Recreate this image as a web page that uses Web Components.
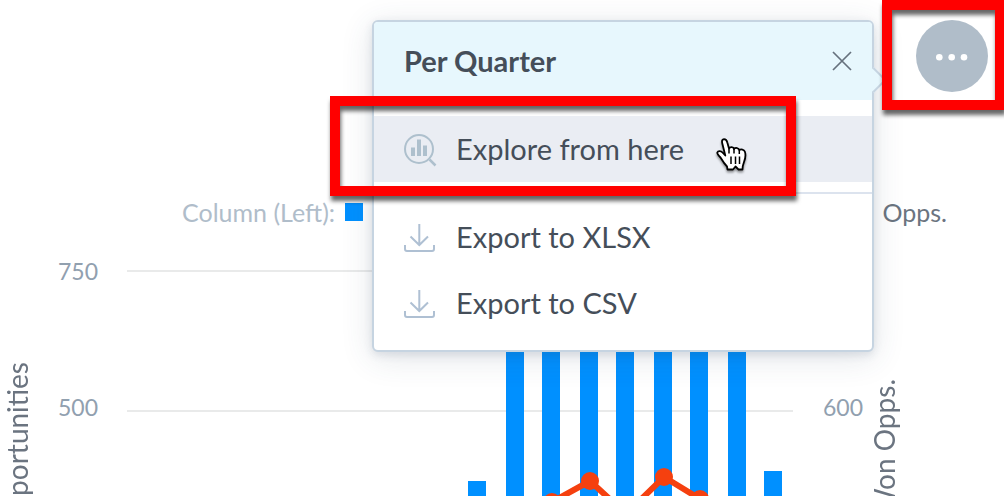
<!DOCTYPE html>
<html lang="en">
<head>
<meta charset="utf-8">
<meta name="viewport" content="width=device-width, initial-scale=1">
<title>Per Quarter</title>
<style>
  body { margin: 0; background: #fff; color: #454e59; font-family: Lato, "Noto Sans", sans-serif; font-size: 25px; line-height: 28px; }
</style>
</head>
<body>
<widget-page></widget-page>
<script>
const define = (name, html) => customElements.define(name, class extends HTMLElement {
  constructor() {
    super();
    this.attachShadow({ mode: "open" }).innerHTML = html;
  }
});

/* Red frame laid over a control to call it out */
define("callout-frame", `
<style>
  :host { position: absolute; box-sizing: border-box; border: 10px solid #f00; pointer-events: none;
          filter: drop-shadow(1px 5px 2px rgba(0,0,0,.6)); }
</style>`);

define("more-button", `
<style>
  :host { display: block; position: relative; }
  button { display: block; width: 72px; height: 72px; padding: 0; border: 0; border-radius: 50%; background: #b0bdc9; cursor: pointer; }
  svg { display: block; }
</style>
<button type="button" aria-label="More options">
  <svg width="72" height="72" viewBox="0 0 72 72" fill="#fff"><circle cx="23.300" cy="37.300" r="3.300"/><circle cx="35.700" cy="37.300" r="3.300"/><circle cx="48" cy="37.300" r="3.300"/></svg>
</button>
<slot></slot>`);

define("chart-legend", `
<style>
  :host { display: flex; justify-content: space-between; padding: 0 57px 0 182px; }
  .group { display: flex; align-items: center; gap: 10px; color: #b0bdca; }
  .swatch { width: 18px; height: 18px; background: #0090ff; }
  .series { color: #6b7480; }
</style>
<div class="group"><span>Column (Left):</span><span class="swatch"></span></div>
<div class="series">Opps.</div>`);

define("axis-title", `
<style>
  :host { display: block; writing-mode: vertical-rl; transform: rotate(180deg); white-space: nowrap; color: #6b7480; font-size: 28px; line-height: 34px; }
</style>
<slot></slot>`);

define("axis-ticks", `
<style>
  :host { display: flex; flex-direction: column; gap: 108px; padding-top: 17px; color: #91a0af; font-size: 23px; }
</style>
<slot></slot>`);

define("chart-plot", `
<style>
  :host { display: block; }
  svg { display: block; width: 100%; }
</style>
<svg viewBox="0 0 666 300" role="img" aria-label="Opportunities and won opportunities per quarter">
  <path d="M0 31H666M0 171H666" stroke="#e9eaea" stroke-width="2"/>
  <path fill="#0090ff" d="M341 241h18v59h-18zM379 60h18v240h-18zM415 60h18v240h-18zM453 60h18v240h-18zM489 60h18v240h-18zM527 60h18v240h-18zM563 60h18v240h-18zM601 60h18v240h-18zM637 231h18v69h-18z"/>
  <g fill="#f5400f"><path d="M387 285L425 262L463 241L499 274L537 237L573 259L610 285" fill="none" stroke="#f5400f" stroke-width="6"/>
  <circle cx="425" cy="262" r="9"/><circle cx="463" cy="241" r="9"/><circle cx="499" cy="274" r="9"/><circle cx="537" cy="237" r="9"/><circle cx="573" cy="259" r="9"/></g>
</svg>`);

define("quarter-chart", `
<style>
  :host { display: block; }
  .body { display: grid; grid-template-columns: 34px 64px minmax(0, 1fr) 44px 34px; align-items: start; margin-top: 14px; padding: 0 103px 0 0; }
  .left { margin-top: 122px; }
  .right { margin-top: 139px; }
  .tall { padding-left: 24px; }
  .low { padding-top: 153px; }
  chart-plot { margin: 0 30px 0 29px; }
</style>
<chart-legend></chart-legend>
<div class="body">
  <axis-title class="left">Opportunities</axis-title>
  <axis-ticks class="tall"><span>750</span><span>500</span></axis-ticks>
  <chart-plot></chart-plot>
  <axis-ticks class="low"><span>600</span></axis-ticks>
  <axis-title class="right">Won Opps.</axis-title>
</div>`);

const icons = {
  explore: `<g fill="none" stroke="#aec0cd" stroke-width="2"><circle cx="15" cy="16" r="14"/><path d="M25.500 26.500L31.500 32.500" stroke-width="2.500"/></g><path fill="#aec0cd" d="M7 14.500h4V23H7zM13 6.500h4V23h-4zM19 12.500h4V23h-4z"/>`,
  download: `<g fill="none" stroke="#afc0d3" stroke-width="2"><path d="M15.300 3V24M6.500 15.500L15.300 24L24 15.500"/><path d="M1 24v4q0 2 2 2h25q2 0 2-2v-4"/></g>`
};
customElements.define("menu-action", class extends HTMLElement {
  constructor() {
    super();
    this.attachShadow({ mode: "open" }).innerHTML = `
<style>
  :host { display: block; position: relative; }
  button { display: flex; align-items: center; gap: 20px; width: 100%; height: 66px; padding: 0 30px; border: 0; background: none;
           color: #454e59; font: inherit; font-size: 29px; line-height: 34px; text-align: left; cursor: pointer; }
  :host([active]) button { background: #eaedf3; }
  svg { flex: none; overflow: visible; }
</style>
<button type="button"><svg width="32" height="32" viewBox="0 0 32 32" aria-hidden="true">${icons[this.getAttribute("icon")]}</svg><span><slot></slot></span></button>
<slot name="over"></slot>`;
  }
});

define("hand-pointer", `
<style>:host { position: absolute; filter: drop-shadow(0 2px 1px rgba(0,0,0,.4)); pointer-events: none; } svg { display: block; }</style>
<svg width="32" height="34" viewBox="0 0 32 34" aria-hidden="true">
  <path d="M11.500 31.500L11 28.500C8 25.500 6 22 4.500 19.500C2.500 17.500 1 16 1.300 14.500C2 12.500 5 12.800 6.500 14.500L9.300 17.500L6.300 5.500C5.500 2.500 6.500 1.300 8 1.200C9.800 1.200 10.800 2.300 11.300 4.500L13 10.500C14 8.500 17.500 8.500 18 11C19.500 9.300 22.800 9.800 23.300 12C25 10.800 28 11.500 28.800 13.500C30 16.500 29.500 20 28 24C27 26.500 26.500 28 26.500 31.500H22.500L19.500 28.500L17 31.500Z" fill="#fff" stroke="#000" stroke-width="1.800" stroke-linejoin="round"/>
  <path d="M13 11V15.500M18 11V15.500M23.300 12V16" stroke="#000" stroke-width="1.500"/>
  <path d="M15 18.500V26M19.500 18.500V26M23.500 18.500V26" stroke="#000" stroke-width="1.500"/>
</svg>`);

define("action-popover", `
<style>
  :host { display: block; position: absolute; box-sizing: border-box; width: 502px; background: #fff; border: 2px solid #c6d4e1; border-radius: 6px;
          box-shadow: 0 6px 32px rgba(50,70,100,.14), 0 3px 8px rgba(50,70,100,.13); padding-bottom: 14px; }
  header { position: relative; display: flex; align-items: center; justify-content: space-between; height: 78px; padding: 0 20px 0 30px;
           background: #e7f7fd; border-radius: 4px 4px 0 0; margin-bottom: 16px; }
  header::after { content: ""; position: absolute; right: -11px; top: 49px; width: 16px; height: 16px; background: #e7f7fd;
           border: solid #c6d4e1; border-width: 2px 2px 0 0; transform: rotate(45deg); }
  h2 { margin: 0; font-size: 29px; line-height: 34px; font-weight: 700; }
  .close { width: 20px; height: 20px; padding: 0; border: 0; background: none; cursor: pointer; }
  .close svg { display: block; }
  hr { margin: 10px 0; border: 0; height: 2px; background: #dce3ee; }
  callout-frame { left: -44px; right: 76px; top: -20px; bottom: -14px; }
  hand-pointer { left: 342px; top: 22px; }
  .first { z-index: 1; }
</style>
<header>
  <h2>Per Quarter</h2>
  <button class="close" type="button" aria-label="Close"><svg width="20" height="20" viewBox="0 0 20 20"><path d="M1 1L19 19M19 1L1 19" stroke="#66717d" stroke-width="1.700"/></svg></button>
</header>
<menu-action class="first" icon="explore" active>Explore from here<callout-frame slot="over"></callout-frame><hand-pointer slot="over"></hand-pointer></menu-action>
<hr>
<menu-action icon="download">Export to XLSX</menu-action>
<menu-action icon="download">Export to CSV</menu-action>`);

define("widget-page", `
<style>
  :host { display: block; position: relative; height: 100vh; overflow: hidden; }
  .toolbar { position: relative; z-index: 2; display: flex; justify-content: flex-end; padding: 20px 16px 0; margin-bottom: 106px; }
  .toolbar callout-frame { left: -34px; right: -17px; top: -20px; bottom: -18px; }
  action-popover { top: 20px; right: 130px; z-index: 1; }
</style>
<div class="toolbar"><more-button><callout-frame></callout-frame></more-button></div>
<quarter-chart></quarter-chart>
<action-popover></action-popover>`);
</script>
</body>
</html>
